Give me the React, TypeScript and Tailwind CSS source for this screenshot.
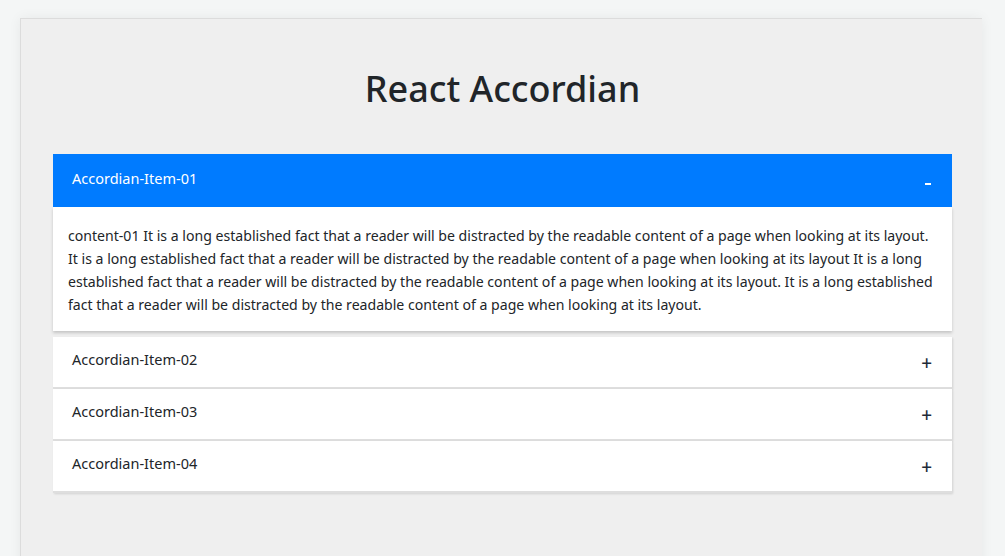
import React, { useState } from "react";

const text =
  "content-01 It is a long established fact that a reader will be distracted by the readable content of a page when looking at its layout. It is a long established fact that a reader will be distracted by the readable content of a page when looking at its layout It is a long established fact that a reader will be distracted by the readable content of a page when looking at its layout. It is a long established fact that a reader will be distracted by the readable content of a page when looking at its layout.";

const items = ["Accordian-Item-01", "Accordian-Item-02", "Accordian-Item-03", "Accordian-Item-04"];

export default function App() {
  const [open, setOpen] = useState(0);
  return (
    <div
      className="w-[1005px] h-[556px] overflow-hidden bg-[#f4f6f6] pt-[18px] pl-[20px]"
      style={{ fontFamily: '"Noto Sans", "Open Sans", sans-serif' }}
    >
      <div className="w-[962px] h-[600px] bg-[#efefef] border-t border-l border-[#dcdcdc] shadow-[0_0_12px_rgba(0,0,0,0.06)] pl-[32px] pr-[30px]">
        <h1 className="text-center text-[36px] font-medium text-[#212529] pt-[48px] pb-[44px] leading-[43px]">
          React Accordian
        </h1>
        <div className="flex flex-col">
          {items.map((label, i) => {
            const isOpen = open === i;
            return (
              <div key={label} className={i === 1 ? "mt-[6px]" : ""}>
                <button
                  onClick={() => setOpen(isOpen ? -1 : i)}
                  className={
                    "w-full flex items-center justify-between pl-[19px] pr-[21px] text-left text-[14.5px] " +
                    (isOpen
                      ? "h-[53px] bg-[#007bff] text-white"
                      : "h-[52px] bg-white text-[#212529] border-b-2 border-[#dedede] shadow-[1px_1px_2px_rgba(0,0,0,0.12)]")
                  }
                >
                  <span className="-mt-[4px]">{label}</span>
                  {isOpen ? (
                    <span className="block w-[6px] h-[2px] bg-white mt-[6px]" />
                  ) : (
                    <span className="text-[19px] font-medium text-[#1e2a38] mt-[2px] -mr-[1px]">+</span>
                  )}
                </button>
                {isOpen && (
                  <div className="bg-white pl-[15px] pr-[14px] pt-[17px] pb-[15px] text-[14.1px] leading-[23px] text-[#212529] shadow-[0_2px_3px_rgba(0,0,0,0.18)]">
                    {text}
                  </div>
                )}
              </div>
            );
          })}
        </div>
      </div>
    </div>
  );
}
